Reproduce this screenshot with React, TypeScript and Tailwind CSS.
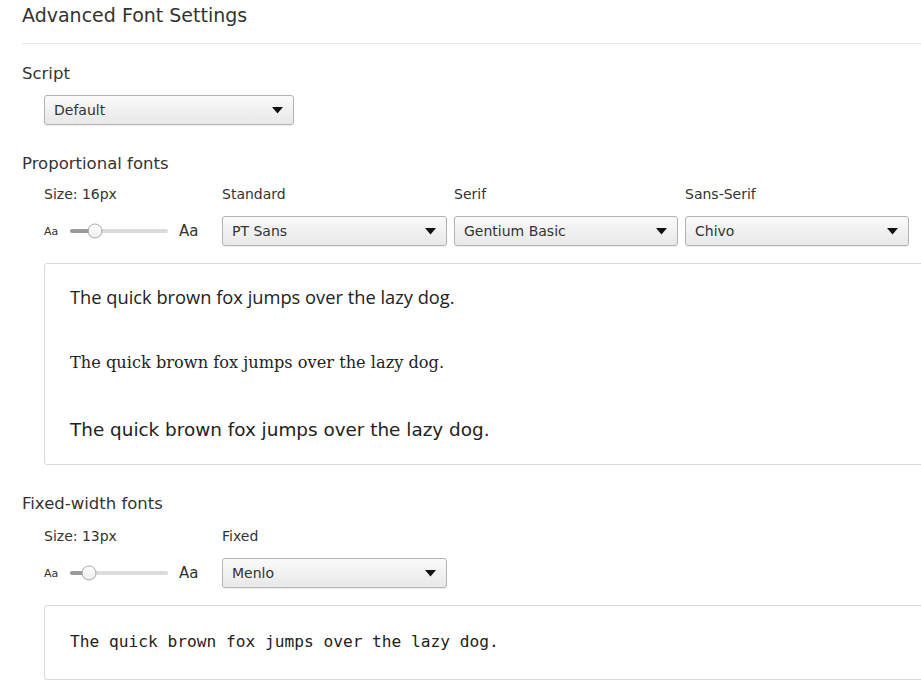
import React from 'react';

const uiFont = { fontFamily: '"DejaVu Sans", "Liberation Sans", sans-serif' };

const Select: React.FC<{ value: string; width?: string }> = ({ value, width = 'w-[224px]' }) => (
  <div
    className={`${width} h-[30px] shrink-0 flex items-center justify-between pl-[9px] pr-[10px] rounded-[3px] border border-[#b4b4b4] bg-gradient-to-b from-[#fafafa] to-[#e8e8e8] shadow-[0_1px_1px_rgba(0,0,0,0.08)] text-[14px] text-[#333]`}
  >
    <span className="pt-[1px]">{value}</span>
    <svg width="11" height="7" viewBox="0 0 11 7">
      <path d="M0 0 H11 L5.5 6.5 Z" fill="#111" />
    </svg>
  </div>
);

const Slider: React.FC<{ pos: number }> = ({ pos }) => (
  <div className="w-[178px] h-[30px] shrink-0 flex items-center text-[#333]">
    <span className="text-[11px] w-[26px] pt-[3px]">Aa</span>
    <div className="relative w-[98px] h-[4px] rounded-full bg-[#dcdcdc]">
      <div className="absolute left-0 top-0 h-[4px] rounded-full bg-[#9a9a9a]" style={{ width: pos }} />
      <div
        className="absolute top-1/2 w-[15px] h-[15px] -translate-y-1/2 -translate-x-1/2 rounded-full border border-[#a8a8a8] bg-gradient-to-b from-white to-[#ededed]"
        style={{ left: pos }}
      />
    </div>
    <span className="text-[15px] ml-[11px] pt-[1px]">Aa</span>
  </div>
);

const Label: React.FC<{ text: string; width?: string }> = ({ text, width = 'w-[232px]' }) => (
  <div className={`${width} text-[14px] leading-[18px] text-[#333] shrink-0`}>{text}</div>
);

const App: React.FC = () => {
  return (
    <div className="w-[921px] h-[686px] overflow-hidden bg-white text-[#333]" style={uiFont}>
      <div className="ml-[22px] h-[44px] border-b border-[#e6e6e6] pt-[2px]">
        <h1 className="text-[19px] leading-[26px] text-[#333]">Advanced Font Settings</h1>
      </div>

      <div className="pl-[22px]">
        <h2 className="mt-[20px] text-[16.5px] leading-[20px]">Script</h2>
        <div className="ml-[22px] mt-[11px]">
          <Select value="Default" width="w-[250px]" />
        </div>

        <h2 className="mt-[29px] text-[16.5px] leading-[20px]">Proportional fonts</h2>
        <div className="ml-[22px]">
          <div className="flex mt-[11px]">
            <Label text="Size: 16px" width="w-[178px]" />
            <Label text="Standard" />
            <Label text="Serif" width="w-[231px]" />
            <Label text="Sans-Serif" />
          </div>
          <div className="flex items-center mt-[13px]">
            <Slider pos={25} />
            <Select value="PT Sans" width="w-[225px]" />
            <div className="ml-[7px]">
              <Select value="Gentium Basic" />
            </div>
            <div className="ml-[7px]">
              <Select value="Chivo" />
            </div>
          </div>
          <div className="mt-[17px] w-[900px] h-[202px] rounded-[3px] border border-[#d9d9d9] pl-[25px] text-[#222]">
            <div className="h-[66px] pt-[20px] leading-[26px]" style={{ fontFamily: '"Open Sans", "Lato", sans-serif', fontSize: 18.3 }}>
              The quick brown fox jumps over the lazy dog.
            </div>
            <div className="h-[66px] pt-[20px] leading-[26px]" style={{ fontFamily: '"DejaVu Serif", "Liberation Serif", serif', fontSize: 16.2 }}>
              The quick brown fox jumps over the lazy dog.
            </div>
            <div className="h-[66px] pt-[21px] leading-[26px]" style={{ fontFamily: '"DejaVu Sans", "Liberation Sans", sans-serif', fontSize: 18.4 }}>
              The quick brown fox jumps over the lazy dog.
            </div>
          </div>
        </div>

        <h2 className="mt-[29px] text-[16.5px] leading-[20px]">Fixed-width fonts</h2>
        <div className="ml-[22px]">
          <div className="flex mt-[13px]">
            <Label text="Size: 13px" width="w-[178px]" />
            <Label text="Fixed" />
          </div>
          <div className="flex items-center mt-[13px]">
            <Slider pos={19} />
            <Select value="Menlo" width="w-[225px]" />
          </div>
          <div className="mt-[17px] w-[900px] h-[75px] rounded-[3px] border border-[#d9d9d9] pl-[25px] flex items-center text-[#222]">
            <span style={{ fontFamily: '"DejaVu Sans Mono", "Liberation Mono", monospace', fontSize: 16.2 }}>
              The quick brown fox jumps over the lazy dog.
            </span>
          </div>
        </div>
      </div>
    </div>
  );
};

export default App;
